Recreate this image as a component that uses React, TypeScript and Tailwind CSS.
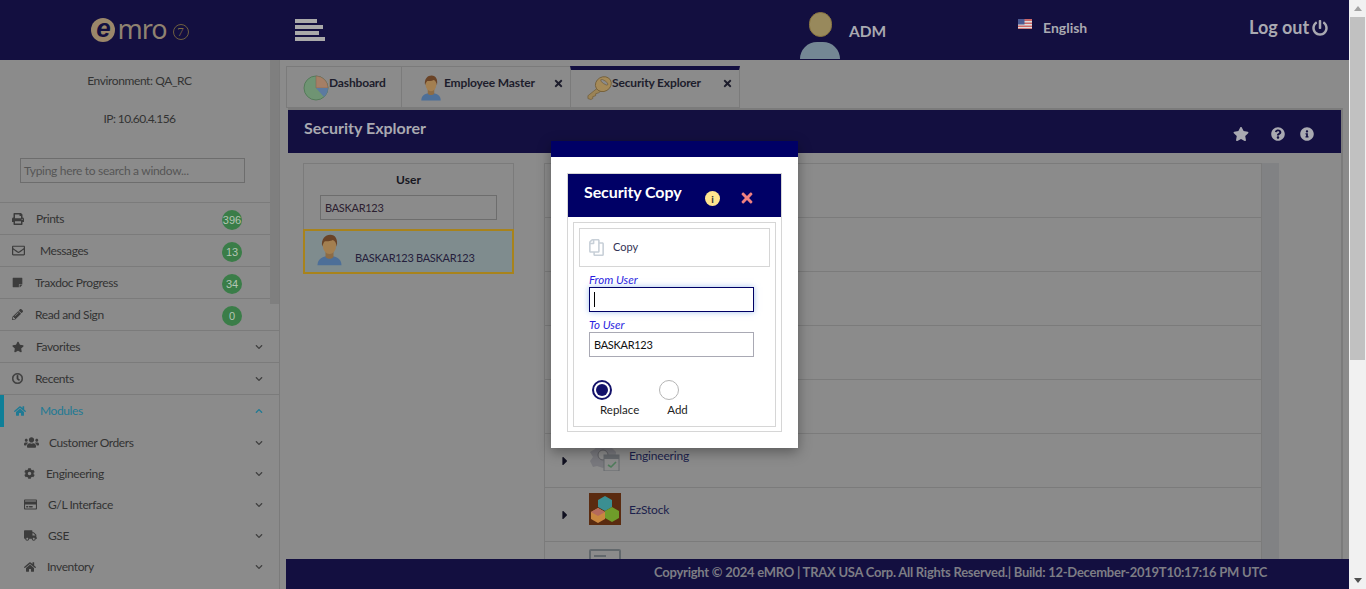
import type { ReactNode } from 'react';
import {
  FaPrint, FaRegEnvelope, FaStickyNote, FaPencilAlt, FaStar, FaHome, FaUsers, FaCog,
  FaTruck, FaRegCreditCard, FaChevronDown, FaChevronUp, FaPowerOff, FaTimes,
  FaQuestionCircle, FaInfoCircle, FaCaretRight, FaRegClock, FaRegCopy,
} from 'react-icons/fa';

const FONT = 'font-["Lato","Liberation_Sans",sans-serif]';

function Person({ className = '' }: { className?: string }) {
  return (
    <svg viewBox="0 0 40 48" className={className}>
      <path d="M2 47c0-10 8-14 18-14s18 4 18 14z" fill="#4d6f98" />
      <path d="M14 26h12v8c-2 4-10 4-12 0z" fill="#8d6c45" />
      <ellipse cx="20" cy="17" rx="10" ry="13" fill="#a37f50" />
      <path d="M9 19C7 7 14 1 21 1c8 0 12 7 10 18-1-6-3-9-6-10-4 2-10 2-12 2-2 2-3 5-4 8z" fill="#6a4326" />
    </svg>
  );
}

function Pie({ className = '' }: { className?: string }) {
  return (
    <svg viewBox="0 0 26 26" className={className}>
      <circle cx="13" cy="13" r="12" fill="#6f9473" stroke="#557a5a" />
      <path d="M13 13V1a12 12 0 0 1 12 12z" fill="#a57f66" stroke="#7d6250" strokeWidth="0.5" />
      <path d="M13 13h12a12 12 0 0 1-4 9z" fill="#5c7aa0" />
    </svg>
  );
}

function Key({ className = '' }: { className?: string }) {
  return (
    <svg viewBox="0 0 26 26" className={className}>
      <path d="M11 13 1 21l0 3 3 1 2-1 0-2 3-1 0-2 3-1 3-2z" fill="#9b8355" stroke="#6f5a35" strokeWidth="0.7" />
      <ellipse cx="17" cy="9" rx="8.5" ry="7.5" fill="#a58a58" stroke="#6f5a35" strokeWidth="0.8" transform="rotate(-30 17 9)" />
      <ellipse cx="18" cy="7" rx="4.5" ry="1.6" fill="#8b8b8b" stroke="#6f5a35" strokeWidth="0.6" transform="rotate(35 18 7)" />
    </svg>
  );
}

function GearCal({ className = '' }: { className?: string }) {
  return (
    <svg viewBox="0 -4 32 32" className={className}>
      <path d="M8 0h4l1 4 4 0 1-4h4l1 5 4 4-1 12-8 2-4 2-6-2-4 1-3-6 3-4-3-5 5-3z" fill="#78787d" />
      <circle cx="14" cy="12" r="5" fill="#8b8b8b" stroke="#5f5f64" />
      <rect x="15" y="12" width="15" height="16" fill="#8b8b8b" stroke="#65686c" />
      <rect x="15" y="12" width="15" height="4" fill="#65686c" />
      <path d="M19 22l3 2 5-5" stroke="#4f7c5b" strokeWidth="1.6" fill="none" />
    </svg>
  );
}

function Cubes({ className = '' }: { className?: string }) {
  return (
    <svg viewBox="0 0 32 32" className={className}>
      <rect width="32" height="32" fill="#5a2b10" />
      <path d="M16 3l7 4v7l-7 4-7-4V7z" fill="#3b8f92" />
      <path d="M9 15l7 4v7l-7 4-7-4v-7z" fill="#c9873f" />
      <path d="M2 19l7 4 7-4-7-4z" fill="#b56a5c" />
      <path d="M23 14l7 4v7l-7 4-7-4v-7z" fill="#6f9c2a" />
    </svg>
  );
}

function Logo() {
  return (
    <div className="flex items-center">
      <div className="flex h-[24px] w-[24px] items-center justify-center rounded-full bg-[#9b876a]">
        <span className="-mt-[5px] text-[26px] leading-none font-bold italic text-[#130f40] font-['Liberation_Sans',sans-serif]">e</span>
      </div>
      <span className="ml-[2px] -mt-[4px] text-[27px] leading-none tracking-[-1px] text-[#8f8270] font-['Noto_Sans',sans-serif]">mro</span>
      <span className="ml-[6px] mt-[3px] flex h-[16px] w-[16px] items-center justify-center rounded-full border border-[#6f5f3f] text-[13px] leading-none text-[#7d6a42] font-['Liberation_Serif',serif]">7</span>
    </div>
  );
}

interface NavItem {
  label: string;
  icon: ReactNode;
  box: string;
  badge?: string;
  chevron?: boolean;
}

const main: NavItem[] = [
  { label: 'Prints', icon: <FaPrint size={12} />, box: 'w-[24px]', badge: '396' },
  { label: 'Messages', icon: <FaRegEnvelope size={13} />, box: 'w-[28px]', badge: '13' },
  { label: 'Traxdoc Progress', icon: <FaStickyNote size={11} />, box: 'w-[23px]', badge: '34' },
  { label: 'Read and Sign', icon: <FaPencilAlt size={11} />, box: 'w-[23px]', badge: '0' },
  { label: 'Favorites', icon: <FaStar size={12} />, box: 'w-[24px]', chevron: true },
  { label: 'Recents', icon: <FaRegClock size={11} stroke="currentColor" strokeWidth={24} />, box: 'w-[23px]', chevron: true },
];

const subs: NavItem[] = [
  { label: 'Customer Orders', icon: <FaUsers size={15} />, box: 'w-[25px]', chevron: true },
  { label: 'Engineering', icon: <FaCog size={11} />, box: 'w-[22px]', chevron: true },
  { label: 'G/L Interface', icon: <FaRegCreditCard size={13} />, box: 'w-[24px]', chevron: true },
  { label: 'GSE', icon: <FaTruck size={13} />, box: 'w-[24px]', chevron: true },
  { label: 'Inventory', icon: <FaHome size={12} />, box: 'w-[23px]', chevron: true },
];

function NavRow({ item }: { item: NavItem }) {
  return (
    <div className="flex h-[32px] items-center border-b border-[#7b7b7b] pl-[12px] pr-[16px] text-[12px] tracking-[-0.4px] text-[#333333]">
      <span className={`${item.box} shrink-0 text-[#3c3c3c]`}>{item.icon}</span>
      <span className="flex-1 whitespace-nowrap">{item.label}</span>
      {item.badge && (
        <span className="mr-[21px] mt-[3px] flex h-[20px] w-[20px] items-center justify-center rounded-full bg-[#3a7d48] text-[11px] tracking-normal text-[#b4c4b4] font-['Liberation_Sans',sans-serif]">
          {item.badge}
        </span>
      )}
      {item.chevron && <FaChevronDown size={8} className="text-[#404040]" />}
    </div>
  );
}

function Sidebar() {
  return (
    <aside className="relative w-[280px] shrink-0 border-r border-[#7b7b7b]">
      {/* scrollbar thumb sits on top of the list */}
      <div className="absolute right-0 top-0 h-[244px] w-[9px] bg-[#7f7f7f]" />
      <div className="pt-[13px] text-center text-[12px] leading-[15px] tracking-[-0.4px] text-[#333333]">Environment: QA_RC</div>
      <div className="pt-[23px] text-center text-[12px] leading-[15px] tracking-[-0.6px] text-[#333333]">IP: 10.60.4.156</div>
      <div className="mt-[32px] ml-[20px] flex h-[25px] w-[225px] items-center border border-[#6d6d6d] pl-[3px] text-[12px] tracking-[-0.3px] text-[#565656]">
        Typing here to search a window...
      </div>
      <div className="mt-[19px] border-t border-[#7b7b7b]">
        {main.map((item) => (
          <NavRow key={item.label} item={item} />
        ))}
        <div className="relative flex h-[32px] items-center pl-[14px] pr-[16px] text-[12px] tracking-[-0.4px] text-[#1f7a94]">
          <span className="absolute left-0 top-0 h-[32px] w-[4px] bg-[#0f7f98]" />
          <span className="w-[26px] shrink-0"><FaHome size={12} /></span>
          <span className="flex-1">Modules</span>
          <FaChevronUp size={8} />
        </div>
        {subs.map((item) => (
          <div key={item.label} className="flex h-[31px] items-center pl-[24px] pr-[16px] text-[12px] tracking-[-0.4px] text-[#333333]">
            <span className={`${item.box} shrink-0 text-[#3c3c3c]`}>{item.icon}</span>
            <span className="flex-1">{item.label}</span>
            <FaChevronDown size={8} className="text-[#404040]" />
          </div>
        ))}
      </div>
    </aside>
  );
}

function Tabs() {
  return (
    <div className="flex h-[42px] text-[12px] font-bold tracking-[-0.15px] text-[#1d1d2c]">
      <div className="flex w-[115px] items-start border border-r-0 border-[#7b7b7b] pl-[16px] pt-[8px]">
        <Pie className="h-[26px] w-[26px] shrink-0" />
        <span className="-mt-[1px]">Dashboard</span>
      </div>
      <div className="flex w-[169px] items-start border border-r-0 border-[#7b7b7b] pl-[18px] pt-[8px]">
        <Person className="h-[26px] w-[22px] shrink-0" />
        <span className="ml-[2px] -mt-[1px] flex-1">Employee Master</span>
        <FaTimes size={11} className="mr-[6px] mt-[3px]" />
      </div>
      <div className="flex w-[170px] items-start border-x border-b border-t-[4px] border-x-[#7b7b7b] border-b-[#7b7b7b] border-t-[#130f40] pl-[16px] pt-[5px]">
        <Key className="h-[26px] w-[25px] shrink-0" />
        <span className="-mt-[1px] flex-1">Security Explorer</span>
        <FaTimes size={11} className="mr-[6px] mt-[3px]" />
      </div>
    </div>
  );
}

const treeRows = [0, 1, 2, 3, 4];

function TreeRow({ children, label }: { children?: ReactNode; label?: string }) {
  return (
    <div className="flex h-[54px] items-center border-b border-[#7b7b7b] pl-[13px]">
      {label && <FaCaretRight size={14} className="text-[#101020]" />}
      {children && <div className="ml-[17px] -mt-[11px] h-[32px] w-[32px]">{children}</div>}
      {label && <span className="ml-[8px] -mt-[10px] text-[12px] tracking-[-0.2px] text-[#1c1f4c]">{label}</span>}
    </div>
  );
}

function Panel() {
  return (
    <div className="ml-[2px] flex min-h-0 flex-1 flex-col border-x-2 border-t-2 border-l-0 border-[#7b7b7b]">
      <div className="flex h-[43px] shrink-0 items-center bg-[#130f40] pl-[16px] pr-[27px] text-[#a9a9b1]">
        <span className="-mt-[8px] flex-1 text-[16px] font-bold">Security Explorer</span>
        <FaStar size={16} className="mt-[5px] mr-[22px]" />
        <FaQuestionCircle size={14} className="mt-[5px] mr-[15px]" />
        <FaInfoCircle size={14} className="mt-[5px]" />
      </div>
      <div className="flex min-h-0 flex-1 overflow-hidden pl-[15px] pt-[10px]">
        <div className="w-[211px] shrink-0">
          <div className="h-[66px] border border-b-0 border-[#7b7b7b] pt-[7px]">
            <div className="text-center text-[12px] font-bold leading-[17px] text-[#17171f]">User</div>
            <div className="ml-[16px] mt-[7px] flex h-[25px] w-[177px] items-center border border-[#6d6d6d] pl-[4px] pt-[1px] text-[11px] tracking-[-0.3px] text-[#2c2030]">
              BASKAR123
            </div>
          </div>
          <div className="flex h-[45px] border-2 border-[#a8831c] bg-[#7f8c8e] pl-[11px]">
            <Person className="mt-[3px] h-[32px] w-[27px] shrink-0" />
            <span className="ml-[12px] mt-[19px] whitespace-nowrap text-[11px] tracking-[-0.3px] text-[#25203c]">BASKAR123 BASKAR123</span>
          </div>
        </div>
        <div className="ml-[30px] w-[718px] shrink-0 border-x border-t border-[#7b7b7b]">
          {treeRows.map((i) => (
            <TreeRow key={i} />
          ))}
          <TreeRow label="Engineering"><GearCal className="h-[32px] w-[32px]" /></TreeRow>
          <TreeRow label="EzStock"><Cubes className="h-[32px] w-[32px]" /></TreeRow>
          <div className="pl-[44px] pt-[7px]">
            <div className="h-[16px] w-[32px] rounded-t-[2px] border-2 border-[#62686c] pl-[3px] pt-[4px]">
              <div className="h-[2px] w-[12px] bg-[#62686c]" />
            </div>
          </div>
        </div>
        <div className="h-full w-[17px] shrink-0 bg-[#818284]" />
      </div>
    </div>
  );
}

function Modal() {
  return (
    <div className="absolute left-[551px] top-[141px] h-[307px] w-[247px] bg-white shadow-[0_4px_12px_rgba(0,0,0,0.35)]">
      <div className="h-[16px] bg-[#000066]" />
      <div className="mx-[16px] mt-[16px] h-[259px] border border-[#d6d6d6]">
        <div className="relative h-[43px] bg-[#000066]">
          <span className="absolute left-[16px] top-[8px] text-[16px] font-bold leading-[20px] tracking-[-0.1px] text-white">Security Copy</span>
          <span className="absolute left-[137px] top-[17px] flex h-[15px] w-[15px] items-center justify-center rounded-full bg-[#ffe58f] text-[10px] font-bold leading-none text-[#333333]">i</span>
          <FaTimes size={16} className="absolute left-[171px] top-[16px] text-[#f08080]" />
        </div>
        <div className="m-[5px] h-[205px] border border-[#d6d6d6] p-[5px]">
          <div className="flex h-[39px] items-center border border-[#d6d6d6] pl-[8px] text-[11px] text-[#333355]">
            <FaRegCopy size={17} className="text-[#c8d0d8] -scale-x-100" />
            <span className="ml-[8px]">Copy</span>
          </div>
          <div className="ml-[10px] mt-[6px] text-[11.5px] italic leading-[14px] text-[#2a1ee0]">From User</div>
          <div className="ml-[10px] flex h-[25px] w-[165px] items-center border border-[#000066] pl-[4px] shadow-[0_0_6px_rgba(102,153,230,0.6)]">
            <span className="h-[15px] w-[1px] bg-black" />
          </div>
          <div className="ml-[10px] mt-[6px] text-[11.5px] italic leading-[14px] text-[#2a1ee0]">To User</div>
          <div className="ml-[10px] flex h-[25px] w-[165px] items-center border border-[#a9a9b4] pl-[4px] pt-[1px] text-[11px] tracking-[-0.3px] text-[#111111]">
            BASKAR123
          </div>
          <div className="ml-[13px] mt-[23px] flex">
            <div className="flex h-[20px] w-[20px] items-center justify-center rounded-full border-2 border-[#13116a]">
              <span className="h-[12px] w-[12px] rounded-full bg-[#13116a]" />
            </div>
            <div className="ml-[47px] h-[20px] w-[20px] rounded-full border border-[#b5b5b5]" />
          </div>
          <div className="ml-[21px] mt-[3px] flex text-[11.5px] leading-[14px] text-[#222222]">
            <span>Replace</span>
            <span className="ml-[28px]">Add</span>
          </div>
        </div>
      </div>
    </div>
  );
}

export default function App() {
  return (
    <div className={`relative flex h-[589px] w-full overflow-hidden ${FONT}`}>
      <div className="flex w-[1349px] shrink-0 flex-col bg-[#8b8b8b]">
        <header className="flex h-[60px] shrink-0 items-center bg-[#130f40] text-[#a9a9b1]">
          <div className="flex w-[280px] shrink-0 justify-center">
            <Logo />
          </div>
          <div className="ml-[15px] flex w-[30px] flex-col gap-[2px]">
            <span className="h-[4px] w-[22px] bg-[#a9a9a9]" />
            <span className="h-[4px] w-[28px] bg-[#a9a9a9]" />
            <span className="h-[4px] w-[24px] bg-[#a9a9a9]" />
            <span className="h-[4px] w-[30px] bg-[#a9a9a9]" />
          </div>
          <div className="ml-[475px] flex h-full w-[40px] flex-col items-center justify-end pb-[1px]">
            <span className="h-[25px] w-[23px] rounded-full border border-[#8a7540] bg-[#98895c]" />
            <span className="mt-[5px] h-[17px] w-[40px] rounded-t-[20px] bg-[#748794]" />
          </div>
          <span className="ml-[9px] mt-[4px] w-[169px] text-[15.5px] font-bold">ADM</span>
          <svg viewBox="0 0 14 10" className="mb-[13px] h-[10px] w-[14px]">
            <rect width="14" height="10" fill="#c66" />
            <rect y="2" width="14" height="1.5" fill="#ddd" />
            <rect y="5" width="14" height="1.5" fill="#ddd" />
            <rect y="8" width="14" height="1.2" fill="#ddd" />
            <rect width="6.5" height="5.5" fill="#4a5a92" />
          </svg>
          <span className="ml-[11px] -mt-[6px] w-[206px] text-[14px] font-bold">English</span>
          <span className="-mt-[5px] whitespace-nowrap text-[18px] font-bold">Log out</span>
          <FaPowerOff size={16} className="ml-[3px] -mt-[5px]" />
        </header>
        <div className="flex min-h-0 flex-1">
          <Sidebar />
          <main className="flex min-w-0 flex-1 flex-col">
            <div className="flex min-h-0 flex-1 flex-col pl-[6px] pr-[6px] pt-[6px]">
              <Tabs />
              <Panel />
            </div>
            <footer className="ml-[6px] flex h-[30px] shrink-0 items-center justify-end bg-[#130f40] pb-[2px] pr-[82px] text-[13px] font-bold tracking-[-0.25px] text-[#7d7d85]">
              Copyright © 2024 eMRO | TRAX USA Corp. All Rights Reserved.| Build: 12-December-2019T10:17:16 PM UTC
            </footer>
          </main>
        </div>
      </div>
      {/* page scrollbar */}
      <div className="flex w-[17px] shrink-0 flex-col items-center bg-[#f1f1f1]">
        <span className="mt-[6px] h-0 w-0 border-x-[4px] border-b-[5px] border-x-transparent border-b-[#a3a3a3]" />
        <span className="mt-[6px] h-[343px] w-[15px] bg-[#c1c1c1]" />
        <span className="mt-auto mb-[6px] h-0 w-0 border-x-[4px] border-t-[5px] border-x-transparent border-t-[#505050]" />
      </div>
      <Modal />
    </div>
  );
}
